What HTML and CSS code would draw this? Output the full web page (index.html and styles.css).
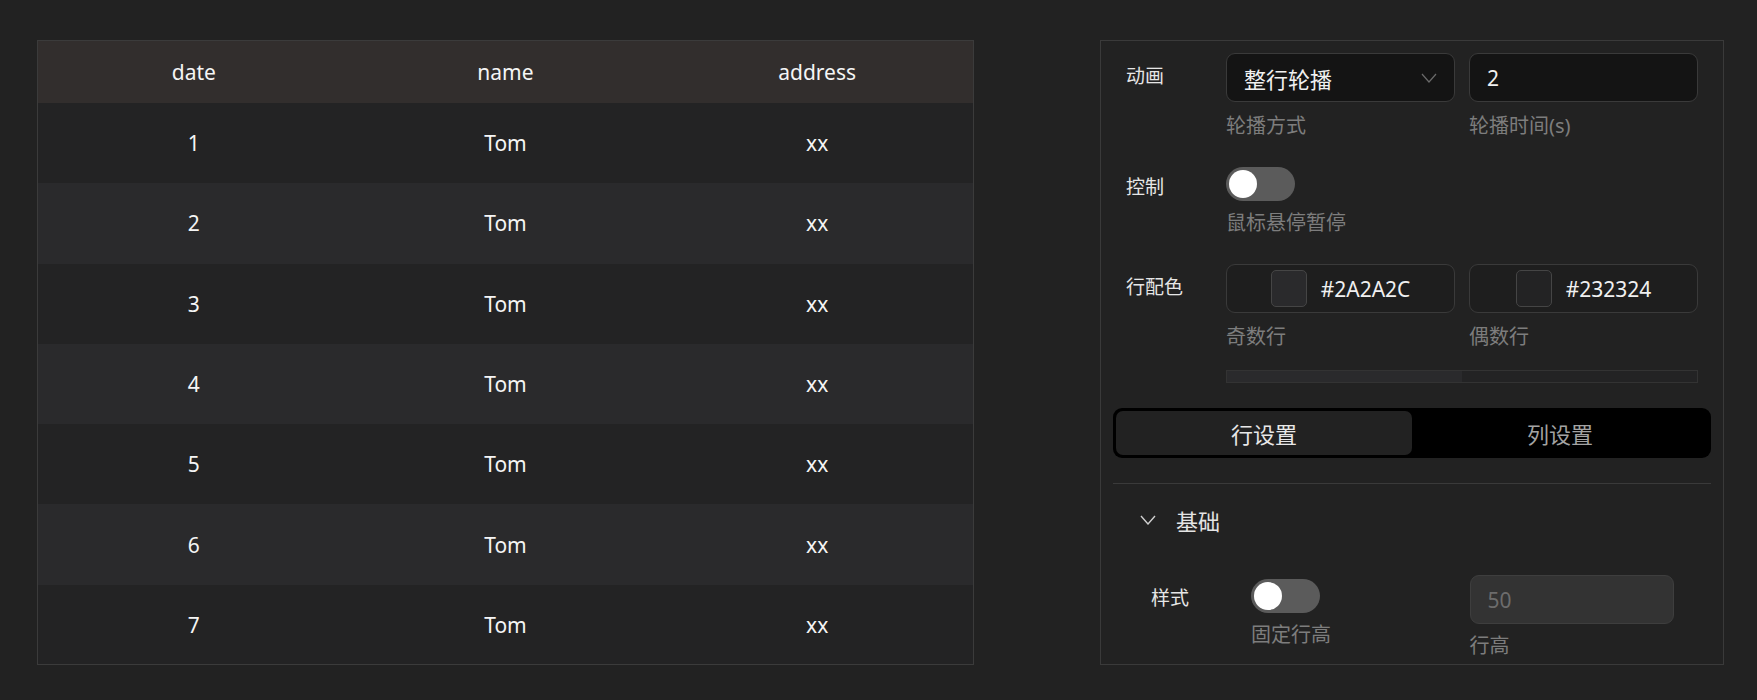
FILE: index.html
```html
<!DOCTYPE html>
<html lang="zh-CN">
<head>
<meta charset="utf-8">
<title>表格轮播设置</title>
<link rel="stylesheet" href="styles.css">
</head>
<body>
<div class="page">
  <div class="table-wrap">
    <table class="data-table">
      <thead>
        <tr><th>date</th><th>name</th><th>address</th></tr>
      </thead>
      <tbody>
        <tr class="row-a"><td>1</td><td>Tom</td><td>xx</td></tr>
        <tr class="row-b"><td>2</td><td>Tom</td><td>xx</td></tr>
        <tr class="row-a"><td>3</td><td>Tom</td><td>xx</td></tr>
        <tr class="row-b"><td>4</td><td>Tom</td><td>xx</td></tr>
        <tr class="row-a"><td>5</td><td>Tom</td><td>xx</td></tr>
        <tr class="row-b"><td>6</td><td>Tom</td><td>xx</td></tr>
        <tr class="row-a"><td>7</td><td>Tom</td><td>xx</td></tr>
      </tbody>
    </table>
  </div>

  <aside class="panel">
    <div class="panel-top">
      <div class="form-row">
        <div class="form-label">动画</div>
        <div class="form-fields">
          <div class="field">
            <div class="select">
              <span class="select-value">整行轮播</span>
              <svg class="chev" width="16" height="10" viewBox="0 0 16 10"><path d="M1 1 L8 9 L15 1" fill="none" stroke="#6a6a6a" stroke-width="1.2"/></svg>
            </div>
            <div class="help">轮播方式</div>
          </div>
          <div class="field">
            <div class="input">2</div>
            <div class="help">轮播时间(s)</div>
          </div>
        </div>
      </div>

      <div class="form-row">
        <div class="form-label form-label--toggle">控制</div>
        <div class="form-fields">
          <div class="field">
            <div class="switch"><span class="knob"></span></div>
            <div class="help help--toggle">鼠标悬停暂停</div>
          </div>
        </div>
      </div>

      <div class="form-row">
        <div class="form-label">行配色</div>
        <div class="form-fields">
          <div class="field">
            <div class="color-input">
              <span class="swatch swatch-a"></span>
              <span class="color-text">#2A2A2C</span>
            </div>
            <div class="help">奇数行</div>
          </div>
          <div class="field">
            <div class="color-input">
              <span class="swatch swatch-b"></span>
              <span class="color-text">#232324</span>
            </div>
            <div class="help">偶数行</div>
          </div>
          <div class="preview">
            <span class="preview-a"></span>
            <span class="preview-b"></span>
          </div>
        </div>
      </div>
    </div>

    <div class="tabs">
      <div class="tab tab--active">行设置</div>
      <div class="tab">列设置</div>
    </div>

    <div class="divider"></div>

    <div class="collapse-head">
      <svg class="collapse-chev" width="16" height="10" viewBox="0 0 16 10"><path d="M1 1 L8 9 L15 1" fill="none" stroke="#cfcfcf" stroke-width="1.4"/></svg>
      <span class="collapse-title">基础</span>
    </div>

    <div class="collapse-body">
      <div class="form-row">
        <div class="form-label">样式</div>
        <div class="form-fields">
          <div class="field">
            <div class="switch switch--inset"><span class="knob"></span></div>
            <div class="help help--toggle">固定行高</div>
          </div>
          <div class="field">
            <div class="input input--disabled">50</div>
            <div class="help help--toggle">行高</div>
          </div>
        </div>
      </div>
    </div>
  </aside>
</div>
</body>
</html>
```

FILE: styles.css
```css
* {
  box-sizing: border-box;
}

html, body {
  margin: 0;
  padding: 0;
  background: #222222;
  font-family: "Noto Sans", "Noto Sans CJK SC", sans-serif;
  color: #f2f2f2;
}

.page {
  display: flex;
  align-items: flex-start;
  gap: 126px;
  padding: 40px 0 0 37px;
  height: 700px;
  overflow: hidden;
}

/* ---------- table ---------- */
.table-wrap {
  width: 937px;
  height: 625px;
  border: 1px solid #3b3b3b;
  overflow: hidden;
}

.data-table {
  width: 100%;
  border-collapse: collapse;
  table-layout: fixed;
  font-size: 21px;
}

.data-table th,
.data-table td {
  padding: 0;
  text-align: center;
  font-weight: 400;
  color: #f5f5f5;
}

.data-table thead tr {
  background: #322e2d;
}

.data-table th {
  height: 62px;
}

.data-table td {
  height: 80.3px;
}

.row-a {
  background: #232324;
}

.row-b {
  background: #2a2a2c;
}

/* ---------- panel ---------- */
.panel {
  width: 624px;
  height: 625px;
  border: 1px solid #3a3a3a;
  overflow: hidden;
  flex-shrink: 0;
}

.panel-top {
  padding: 12px 25px 0 25px;
  display: flex;
  flex-direction: column;
  gap: 27px;
}

.form-row {
  display: flex;
  align-items: flex-start;
}

.form-label {
  width: 100px;
  flex-shrink: 0;
  font-size: 19px;
  line-height: 30px;
  padding-top: 8px;
  color: #e6e6e6;
}

.form-label--toggle {
  padding-top: 5px;
}

.form-fields {
  flex: 1;
  display: grid;
  grid-template-columns: 1fr 1fr;
  column-gap: 14px;
}

.field {
  display: flex;
  flex-direction: column;
  align-items: flex-start;
}

.help {
  margin-top: 10px;
  font-size: 20px;
  line-height: 28px;
  color: #7d7d7d;
}

.help--toggle {
  margin-top: 8px;
}

.select,
.input,
.color-input {
  width: 100%;
  height: 49px;
  border: 1px solid #3a3a3a;
  border-radius: 9px;
  display: flex;
  align-items: center;
}

.select {
  background: #141414;
  padding: 0 17px 0 17px;
  justify-content: space-between;
}

.select-value {
  font-size: 22px;
  color: #f0f0f0;
}

.chev {
  display: block;
}

.input {
  background: #141414;
  padding: 0 17px;
  font-size: 21px;
  color: #f0f0f0;
}

.input--disabled {
  background: #333333;
  border-color: #3e3e3e;
  color: #6c6c6c;
}

.color-input {
  background: #1e1e1e;
  justify-content: center;
  gap: 14px;
}

.swatch {
  width: 36px;
  height: 37px;
  border: 1px solid #454545;
  border-radius: 5px;
}

.swatch-a {
  background: #2a2a2c;
}

.swatch-b {
  background: #232324;
}

.color-text {
  font-size: 21px;
  color: #f0f0f0;
}

.preview {
  grid-column: 1 / span 2;
  margin-top: 19px;
  height: 13px;
  border: 1px solid #333333;
  display: flex;
}

.preview-a,
.preview-b {
  flex: 1;
}

.preview-a {
  background: #2a2a2c;
}

.preview-b {
  background: #232324;
}

/* switch */
.switch {
  width: 69px;
  height: 34px;
  border-radius: 17px;
  background: #5b5b5b;
  padding: 3px;
  display: flex;
  align-items: center;
}

.switch--inset {
  margin-top: 4px;
}

.knob {
  width: 28px;
  height: 28px;
  border-radius: 50%;
  background: #ffffff;
}

/* tabs */
.tabs {
  margin: 25px 12px 0 12px;
  height: 50px;
  background: #000000;
  border-radius: 9px;
  padding: 3px;
  display: flex;
}

.tab {
  flex: 1;
  display: flex;
  align-items: center;
  justify-content: center;
  font-size: 22px;
  color: #a3a3a3;
  border-radius: 7px;
}

.tab--active {
  background: #222222;
  color: #e8e8e8;
}

.divider {
  margin: 25px 12px 0 12px;
  height: 1px;
  background: #3a3a3a;
}

/* collapse */
.collapse-head {
  height: 72px;
  display: flex;
  align-items: center;
  padding-left: 39px;
}

.collapse-chev {
  display: block;
}

.collapse-title {
  margin-left: 20px;
  font-size: 22px;
  color: #e4e4e4;
}

.collapse-body {
  padding: 19px 49px 0 50px;
}
```
